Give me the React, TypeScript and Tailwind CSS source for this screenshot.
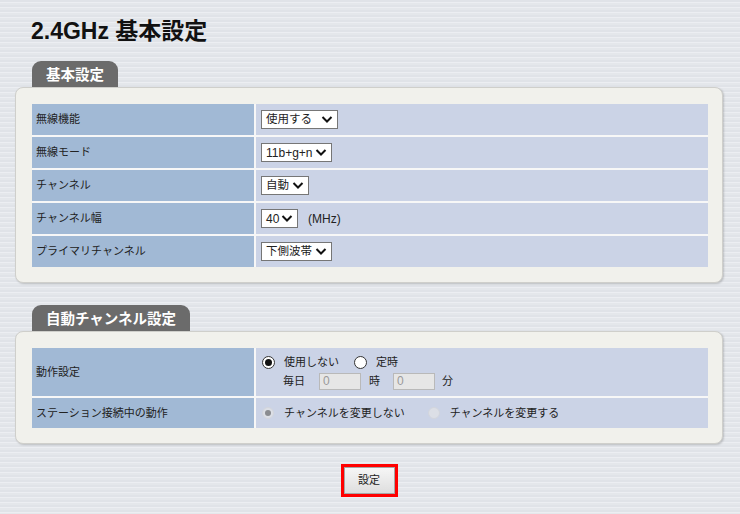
import React from "react";

const font = "font-['Liberation_Sans','Noto_Sans_CJK_JP',sans-serif]";

function Chevron() {
  return (
    <svg width="12" height="9" viewBox="0 0 12 9" className="shrink-0">
      <path d="M1.5 2 L6 6.5 L10.5 2" fill="none" stroke="#111" strokeWidth="2" />
    </svg>
  );
}

function Select({ value, w, jp }: { value: string; w: string; jp?: boolean }) {
  return (
    <div className={`${w} h-[19px] border border-[#767676] bg-white flex items-center justify-between pl-[4px] pr-[4px] ${jp ? "text-[11.5px]" : "text-[12px]"} text-[#222]`}>
      <span className="leading-none whitespace-nowrap">{value}</span>
      <Chevron />
    </div>
  );
}

function Radio({ checked, disabled }: { checked?: boolean; disabled?: boolean }) {
  if (disabled) {
    return (
      <span className="w-[12px] h-[12px] rounded-full bg-[#dcdfe6] border border-[#d2d5dd] flex items-center justify-center shrink-0">
        {checked && <span className="w-[6px] h-[6px] rounded-full bg-[#8a8c90]" />}
      </span>
    );
  }
  return (
    <span className="w-[13px] h-[13px] rounded-full bg-white border border-[#333] flex items-center justify-center shrink-0">
      {checked && <span className="w-[7px] h-[7px] rounded-full bg-[#111]" />}
    </span>
  );
}

function Tab({ label }: { label: string }) {
  return (
    <div className="ml-[32px] self-start h-[26px] px-[14px] rounded-t-[9px] bg-[#6b6b6b] text-white font-bold text-[14.5px] leading-[26px] font-['Noto_Sans_CJK_JP',sans-serif]">
      {label}
    </div>
  );
}

function Panel({ children }: { children: React.ReactNode }) {
  return (
    <div className="ml-[15px] mr-[17px] rounded-[8px] border border-[#cfcfcb] bg-[#f1f1ec] shadow-[1px_1px_2px_rgba(0,0,0,0.18)] pt-[16px] pb-[15px] pl-[16px] pr-[14px]">
      {children}
    </div>
  );
}

function Row({ label, h, children }: { label: string; h: string; children: React.ReactNode }) {
  return (
    <>
      <div className={`${h} bg-[#a1b9d5] flex items-center pl-[4px] text-[11px] text-[#222]`}>{label}</div>
      <div className={`${h} bg-[#cbd3e6] flex items-center pl-[5px] text-[11px] text-[#222]`}>{children}</div>
    </>
  );
}

export default function App() {
  return (
    <div className={`${font} w-[740px] min-h-[514px] bg-[repeating-linear-gradient(to_bottom,#e0e3e8_0px,#e0e3e8_2px,#eceef2_2px,#eceef2_3px,#e4e7eb_3px,#e4e7eb_5px)] pt-[16px] pb-[19px] flex flex-col`}>
      <h1 className="ml-[31px] text-[23px] font-bold leading-[30px] text-[#111] font-['Liberation_Sans','Noto_Sans_CJK_JP',sans-serif]">
        2.4GHz 基本設定
      </h1>

      <div className="mt-[15px] flex flex-col">
        <Tab label="基本設定" />
        <Panel>
          <div className="grid grid-cols-[222px_1fr] gap-[2px] bg-[#f7f7f7]">
            <Row label="無線機能" h="h-[31px]">
              <Select value="使用する" w="w-[77px]" jp />
            </Row>
            <Row label="無線モード" h="h-[31px]">
              <Select value="11b+g+n" w="w-[71px]" />
            </Row>
            <Row label="チャンネル" h="h-[31px]">
              <Select value="自動" w="w-[48px]" jp />
            </Row>
            <Row label="チャンネル幅" h="h-[31px]">
              <Select value="40" w="w-[37px]" />
              <span className="ml-[10px] text-[12px]">(MHz)</span>
            </Row>
            <Row label="プライマリチャンネル" h="h-[31px]">
              <Select value="下側波帯" w="w-[71px]" jp />
            </Row>
          </div>
        </Panel>
      </div>

      <div className="mt-[22px] flex flex-col">
        <Tab label="自動チャンネル設定" />
        <Panel>
          <div className="grid grid-cols-[222px_1fr] gap-[2px] bg-[#f7f7f7]">
            <Row label="動作設定" h="h-[48px]">
              <div className="flex flex-col gap-[2px] pl-[1px]">
                <div className="flex items-center h-[17px]">
                  <Radio checked />
                  <span className="ml-[9px]">使用しない</span>
                  <span className="ml-[15px]"><Radio /></span>
                  <span className="ml-[9px]">定時</span>
                </div>
                <div className="flex items-center h-[17px] pl-[21px]">
                  <span>毎日</span>
                  <div className="ml-[14px] w-[42px] h-[17px] bg-[#e6e6e6] border border-[#b9b9b9] text-[#9a9a9a] text-[12px] pl-[3px] leading-[15px]">0</div>
                  <span className="ml-[8px]">時</span>
                  <div className="ml-[13px] w-[42px] h-[17px] bg-[#e6e6e6] border border-[#b9b9b9] text-[#9a9a9a] text-[12px] pl-[3px] leading-[15px]">0</div>
                  <span className="ml-[7px]">分</span>
                </div>
              </div>
            </Row>
            <Row label="ステーション接続中の動作" h="h-[30px]">
              <div className="flex items-center pl-[1px]">
                <Radio checked disabled />
                <span className="ml-[10px]">チャンネルを変更しない</span>
                <span className="ml-[23px]"><Radio disabled /></span>
                <span className="ml-[10px]">チャンネルを変更する</span>
              </div>
            </Row>
          </div>
        </Panel>
      </div>

      <div className="mt-[20px] self-center border-[3px] border-[#ff0000] ml-[-2px]">
        <button className="w-[51px] h-[27px] border border-[#a6a6a6] bg-[linear-gradient(to_bottom,#f6f6f6,#dedede)] text-[11px] text-[#222] flex items-center justify-center">
          設定
        </button>
      </div>
    </div>
  );
}
